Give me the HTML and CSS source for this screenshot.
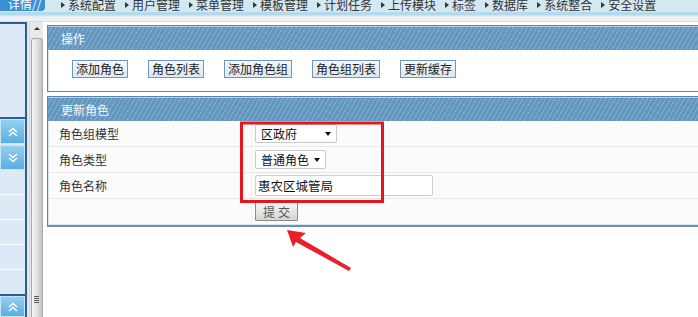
FILE: index.html
```html
<!DOCTYPE html>
<html lang="zh-CN">
<head>
<meta charset="utf-8">
<title>更新角色</title>
<link rel="stylesheet" href="styles.css">
</head>
<body>
<header class="top">
  <div class="tab">详情//</div>
  <ul class="nav">
    <li>系统配置</li>
    <li>用户管理</li>
    <li>菜单管理</li>
    <li>模板管理</li>
    <li>计划任务</li>
    <li>上传模块</li>
    <li>标签</li>
    <li>数据库</li>
    <li>系统整合</li>
    <li>安全设置</li>
  </ul>
</header>
<div class="band"></div>
<div class="main">
  <aside class="side">
    <div class="side-panel"></div>
    <div class="acc"><svg width="10" height="10" viewBox="0 0 10 10"><path d="M1 5 L5 1.5 L9 5 M1 9 L5 5.5 L9 9" fill="none" stroke="#fff" stroke-width="1.4"/></svg></div>
    <div class="acc acc-gap"><svg width="10" height="10" viewBox="0 0 10 10"><path d="M1 1 L5 4.5 L9 1 M1 5 L5 8.5 L9 5" fill="none" stroke="#fff" stroke-width="1.4"/></svg></div>
    <ul class="side-list"><li></li><li></li><li></li><li></li><li></li></ul>
    <div class="acc acc-last"><svg width="10" height="10" viewBox="0 0 10 10"><path d="M1 5 L5 1.5 L9 5 M1 9 L5 5.5 L9 9" fill="none" stroke="#fff" stroke-width="1.4"/></svg></div>
  </aside>
  <div class="gutter"></div>
  <div class="scroll">
    <div class="sc-arrow"></div>
    <div class="thumb"><span class="grip"></span></div>
  </div>
  <div class="content">
    <section class="box">
      <h2 class="box-h">操作</h2>
      <div class="ops">
        <button class="op">添加角色</button>
        <button class="op">角色列表</button>
        <button class="op">添加角色组</button>
        <button class="op">角色组列表</button>
        <button class="op">更新缓存</button>
      </div>
    </section>
    <section class="box box-form">
      <h2 class="box-h">更新角色</h2>
      <div class="row">
        <div class="lbl">角色组模型</div>
        <div class="val"><span class="sel sel-1">区政府<i class="caret"></i></span></div>
      </div>
      <div class="row">
        <div class="lbl">角色类型</div>
        <div class="val"><span class="sel sel-2">普通角色<i class="caret"></i></span></div>
      </div>
      <div class="row">
        <div class="lbl">角色名称</div>
        <div class="val"><input class="txt" type="text" value="惠农区城管局"></div>
      </div>
      <div class="row row-last">
        <div class="lbl"></div>
        <div class="val"><button class="submit">提交</button></div>
      </div>
    </section>
  </div>
</div>
<svg class="annot" width="698" height="317" viewBox="0 0 698 317">
  <rect x="241.5" y="123" width="141" height="78.5" fill="none" stroke="#e5161f" stroke-width="3"/>
  <polygon points="287,230 306,233 300,238 351,268 349,271 296,242 293,247" fill="#e8202a"/>
</svg>
</body>
</html>
```

FILE: styles.css
```css
* { box-sizing: border-box; }
html, body { margin: 0; padding: 0; }
body {
  width: 698px;
  height: 317px;
  overflow: hidden;
  position: relative;
  background: #ffffff;
  font-family: "Noto Sans CJK SC", "Noto Sans", sans-serif;
  font-size: 12px;
  color: #222;
}

/* top navigation */
.top {
  display: flex;
  height: 12px;
  background: #d4e8f2;
  overflow: visible;
}
.tab {
  width: 45px;
  height: 13px;
  background: #3b8ed1;
  color: #fff;
  border-bottom-right-radius: 4px;
  padding-left: 8px;
  line-height: 12px;
  margin-top: -2px;
  position: relative;
  z-index: 1;
  overflow: hidden;
}
.nav {
  list-style: none;
  display: flex;
  margin: -3px 0 0 12px;
  padding: 0 0 0 4px;
  line-height: 13px;
  color: #333;
}
.nav li {
  display: flex;
  align-items: center;
  margin-right: 9px;
}
.nav li::before {
  content: "";
  width: 0;
  height: 0;
  border-top: 3px solid transparent;
  border-bottom: 3px solid transparent;
  border-left: 4px solid #333;
  margin-right: 3px;
}
.band {
  height: 10px;
  background: linear-gradient(#b3d9ec 0, #b3d9ec 3px, #e6eef3 4px, #eef3f6 9px, #b9c9d6 10px);
}

/* main area */
.main {
  display: flex;
  height: 295px;
}
.side {
  width: 27px;
  display: flex;
  flex-direction: column;
  border-top: 2px solid #2b5d99;
  border-right: 2px solid #2b5d99;
  background: #dde9f6;
}
.side-panel {
  height: 95px;
  border-bottom: 2px solid #2b5d99;
}
.acc {
  height: 25px;
  flex-shrink: 0;
  display: flex;
  align-items: center;
  justify-content: center;
  background: linear-gradient(#93cff1, #5aaee0);
  border: 1px solid #c8e4f5;
}
.acc-gap { margin-top: 1px; }
.side-list {
  list-style: none;
  margin: 0;
  padding: 0;
  height: 126px;
  flex-shrink: 0;
  display: flex;
  flex-direction: column;
}
.side-list li {
  flex: 1;
  border-bottom: 1px solid #fbfdff;
}
.side-list li:last-child { border-bottom: 2px solid #2b5d99; }
.acc-last { flex: 1; }

.gutter {
  width: 2px;
  background: #e4e8ec;
}
.scroll {
  width: 14px;
  background: #e9e9e9;
  border-left: 1px solid #d6d6d6;
  display: flex;
  flex-direction: column;
  align-items: center;
}
.sc-arrow {
  margin-top: 5px;
  width: 0;
  height: 0;
  border-left: 3px solid transparent;
  border-right: 3px solid transparent;
  border-bottom: 3px solid #333;
}
.thumb {
  margin-top: 8px;
  width: 12px;
  flex: 1;
  border: 1px solid #a9a9a9;
  border-bottom: none;
  border-radius: 3px 3px 0 0;
  background: linear-gradient(90deg, #f6f6f6, #e2e2e2 50%, #c4c4c4);
  display: flex;
  justify-content: center;
}
.grip {
  margin-top: 257px;
  width: 5px;
  height: 7px;
  background: repeating-linear-gradient(#555 0, #555 1px, transparent 1px, transparent 2px);
}

.content {
  flex: 1;
  padding: 3px 0 0 4px;
  background: #fff;
}

/* boxes */
.box {
  border: 1px solid #5d86b0;
  border-right: none;
  box-shadow: inset 1px 0 0 #d6e4f0;
  background: #fff;
}
.box-h {
  margin: 0;
  height: 24px;
  line-height: 23px;
  padding-left: 13px;
  font-size: 12px;
  font-weight: normal;
  color: #f4f8fb;
  border-top: 1px solid #b4cde0;
  background-color: #6497bf;
  background-image: repeating-linear-gradient(120deg, rgba(255,255,255,0) 0, rgba(255,255,255,0) 3px, rgba(255,255,255,0.2) 3px, rgba(255,255,255,0.2) 4px);
}
.ops {
  height: 41px;
  display: flex;
  align-items: flex-start;
  gap: 20px;
  padding: 10px 0 0 24px;
}
.op {
  height: 18px;
  padding: 0 3px;
  border: 1px solid #6e98c4;
  background: linear-gradient(#f4f8fc, #dde8f2);
  font-family: inherit;
  font-size: 12px;
  line-height: 16px;
  color: #222;
  border-radius: 0;
}
.box-form {
  margin-top: 4px;
  background: #fbfbfb;
  border-bottom: 2px solid #6f8fb0;
}
.row {
  display: flex;
  height: 26px;
  border-bottom: 1px solid #e8e8e8;
}
.row-last { border-bottom: 1px solid #dbe6f0; }
.lbl {
  width: 204px;
  padding-left: 11px;
  line-height: 25px;
  color: #333;
  border-right: 1px solid #f0f0f0;
}
.val {
  flex: 1;
  display: flex;
  align-items: center;
  padding-left: 3px;
}
.sel {
  display: flex;
  align-items: center;
  justify-content: space-between;
  height: 19px;
  padding: 0 5px;
  background: #fff;
  border: 1px solid #c9c9c9;
  border-radius: 2px;
  color: #111;
  font-size: 12px;
}
.sel-1 { width: 82px; }
.sel-2 { width: 71px; }
.caret {
  width: 0;
  height: 0;
  border-left: 3.5px solid transparent;
  border-right: 3.5px solid transparent;
  border-top: 4px solid #111;
}
.txt {
  width: 178px;
  height: 21px;
  border: 1px solid #cfcfcf;
  padding: 0 2px;
  font-family: inherit;
  font-size: 12.5px;
  color: #111;
  background: #fff;
  border-radius: 2px;
}
.submit {
  width: 43px;
  height: 19px;
  padding: 0;
  border: 1px solid #8a8a8a;
  background: linear-gradient(#f8f8f8, #d4d4d4);
  font-family: inherit;
  font-size: 12px;
  letter-spacing: 3px;
  text-indent: 3px;
  color: #555;
  border-radius: 1px;
}

.annot {
  position: absolute;
  left: 0;
  top: 0;
  pointer-events: none;
}
```
